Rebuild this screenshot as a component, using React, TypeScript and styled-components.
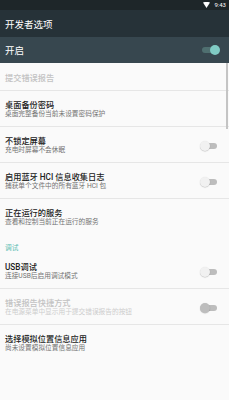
import styled, { createGlobalStyle } from "styled-components";

const GlobalStyle = createGlobalStyle`
    html, body {
        margin: 0;
        padding: 0;
        background: #fafafa;
    }
    body {
        font-family: Roboto, "Noto Sans CJK SC", sans-serif;
    }
`;

type Row = {
    title: string;
    summary?: string;
    toggle?: boolean;
    disabled?: boolean;
    divider?: boolean;
};

const rows: Row[] = [
    { title: "提交错误报告", disabled: true, divider: true },
    { title: "桌面备份密码", summary: "桌面完整备份当前未设置密码保护", divider: true },
    { title: "不锁定屏幕", summary: "充电时屏幕不会休眠", toggle: true, divider: true },
    { title: "启用蓝牙 HCI 信息收集日志", summary: "捕获单个文件中的所有蓝牙 HCI 包", toggle: true, divider: true },
    { title: "正在运行的服务", summary: "查看和控制当前正在运行的服务" },
];

const debugRows: Row[] = [
    { title: "USB调试", summary: "连接USB后启用调试模式", toggle: true, divider: true },
    { title: "错误报告快捷方式", summary: "在电源菜单中显示用于提交错误报告的按钮", toggle: true, disabled: true, divider: true },
    { title: "选择模拟位置信息应用", summary: "尚未设置模拟位置信息应用" },
];

function Item({ row }: { row: Row }) {
    return (
        <SItem $divider={row.divider} $tall={!!row.summary}>
            <SText>
                <STitle $disabled={row.disabled}>{row.title}</STitle>
                {row.summary && <SSummary $disabled={row.disabled}>{row.summary}</SSummary>}
            </SText>
            {row.toggle && <Switch disabled={row.disabled} />}
        </SItem>
    );
}

function Switch({ on, disabled }: { on?: boolean; disabled?: boolean }) {
    return (
        <SSwitch>
            <STrack $on={on} />
            <SThumb $on={on} $disabled={disabled} />
        </SSwitch>
    );
}

export default function App() {
    return (
        <SPage>
            <GlobalStyle />
            <SStatusBar>
                <svg width="7" height="6" viewBox="0 0 7 6">
                    <path d="M0 0.5 Q3.5 -0.8 7 0.5 L3.5 6 Z" fill="#fff" />
                </svg>
                <STime>9:43</STime>
            </SStatusBar>
            <SAppBar>开发者选项</SAppBar>
            <SMaster>
                <span>开启</span>
                <Switch on />
            </SMaster>
            <SList>
                <SScrollbar />
                {rows.map((r) => (
                    <Item key={r.title} row={r} />
                ))}
                <SCategory>调试</SCategory>
                {debugRows.map((r) => (
                    <Item key={r.title} row={r} />
                ))}
            </SList>
        </SPage>
    );
}

const SPage = styled.div`
    width: 229px;
    height: 400px;
    overflow: hidden;
    background: #fafafa;
    display: flex;
    flex-direction: column;
`;

const SStatusBar = styled.div`
    height: 10px;
    background: #1e2629;
    display: flex;
    align-items: center;
    justify-content: flex-end;
    gap: 4px;
    padding-right: 3px;
`;

const STime = styled.span`
    color: #fff;
    font-size: 6px;
    line-height: 10px;
    font-family: Roboto, sans-serif;
`;

const SAppBar = styled.div`
    height: 27px;
    background: #263238;
    color: #fff;
    font-size: 9.5px;
    display: flex;
    align-items: center;
    padding-left: 5px;
`;

const SMaster = styled.div`
    height: 26px;
    background: #37474f;
    color: #fff;
    font-size: 9.5px;
    display: flex;
    align-items: center;
    justify-content: space-between;
    padding: 0 9px 0 5px;
`;

const SList = styled.div`
    position: relative;
    display: flex;
    flex-direction: column;
`;

const SScrollbar = styled.div`
    position: absolute;
    right: 1px;
    top: 0;
    width: 2px;
    height: 66px;
    background: #c4c4c4;
`;

const SItem = styled.div<{ $divider?: boolean; $tall: boolean }>`
    box-sizing: border-box;
    height: ${({ $tall }) => ($tall ? "36px" : "28px")};
    display: flex;
    align-items: center;
    justify-content: space-between;
    padding: 2px 9px 0 5px;
    border-bottom: 1px solid ${({ $divider }) => ($divider ? "#e6e6e6" : "transparent")};
`;

const SText = styled.div`
    display: flex;
    flex-direction: column;
`;

const STitle = styled.div<{ $disabled?: boolean }>`
    font-size: 8.2px;
    line-height: 10px;
    font-weight: 500;
    color: ${({ $disabled }) => ($disabled ? "#c2c2c2" : "#212121")};
`;

const SSummary = styled.div<{ $disabled?: boolean }>`
    font-size: 6.7px;
    line-height: 9px;
    color: ${({ $disabled }) => ($disabled ? "#cdcdcd" : "#737373")};
`;

const SCategory = styled.div`
    height: 18px;
    display: flex;
    align-items: flex-end;
    padding-left: 5px;
    font-size: 6.7px;
    line-height: 9px;
    color: #5bbdb2;
`;

const SSwitch = styled.div`
    position: relative;
    width: 20px;
    height: 10px;
    flex-shrink: 0;
`;

const STrack = styled.div<{ $on?: boolean }>`
    position: absolute;
    left: 2px;
    right: 3px;
    top: 2px;
    height: 6px;
    border-radius: 3px;
    background: ${({ $on }) => ($on ? "#4f6f70" : "#bdbdbd")};
`;

const SThumb = styled.div<{ $on?: boolean; $disabled?: boolean }>`
    position: absolute;
    top: 0;
    left: ${({ $on }) => ($on ? "10px" : "0")};
    width: 10px;
    height: 10px;
    border-radius: 50%;
    background: ${({ $on, $disabled }) => ($on ? "#80cbc4" : $disabled ? "#bdbdbd" : "#f1f1f1")};
    box-shadow: ${({ $on }) => ($on ? "none" : "0 0.5px 1px rgba(0,0,0,0.25)")};
`;
